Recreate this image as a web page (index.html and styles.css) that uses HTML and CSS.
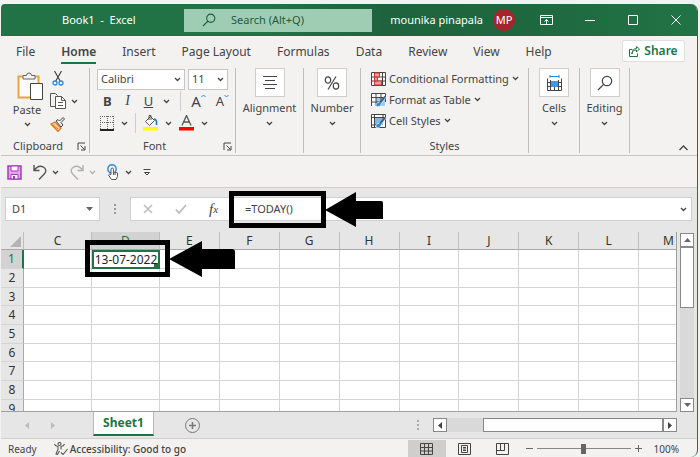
FILE: index.html
```
<!DOCTYPE html>
<html lang="en">
<head>
    <meta charset="UTF-8">
    <meta name="viewport" content="width=device-width, initial-scale=1">
    <title>Book1 - Excel</title>
    <link rel="stylesheet" href="styles.css">
</head>
<body>
    <svg class="defs" width="0" height="0" aria-hidden="true">
        <symbol id="chev" viewBox="0 0 7 5"><path d="M1 1l2.500 2.500L6 1" fill="none" stroke="currentColor" stroke-width="1.300"/></symbol>
        <symbol id="launch" viewBox="0 0 9 9"><path d="M1 8V1h7M3.500 3.500L7.500 7.500M8 4v4H4" fill="none" stroke="currentColor"/></symbol>
        <symbol id="glass" viewBox="0 0 16 16"><circle cx="10" cy="6" r="4.700" fill="none" stroke="currentColor" stroke-width="1.200"/><path d="M6.600 9.400L1 15" stroke="currentColor" stroke-width="1.300"/></symbol>
    </svg>
    <div class="window">
        <header class="titlebar">
            <h1 class="doc-title">Book1&nbsp; -&nbsp; Excel</h1>
            <label class="search">
                <svg width="14" height="14"><use href="#glass"/></svg>
                <input type="text" placeholder="Search (Alt+Q)" aria-label="Search">
            </label>
            <div class="account">
                <span>mounika pinapala</span>
                <span class="avatar">MP</span>
            </div>
            <div class="window-buttons">
                <button type="button" aria-label="Ribbon display options"><svg width="13" height="10" fill="none" stroke="currentColor"><path d="M.5.5h12v9H.5zM.5 2.500h12M6.500 9V4.500M4.500 6.500l2-2 2 2"/></svg></button>
                <button type="button" aria-label="Minimize"><svg width="10" height="10" stroke="currentColor"><path d="M0 5.500h10"/></svg></button>
                <button type="button" aria-label="Maximize"><svg width="10" height="10" fill="none" stroke="currentColor"><path d="M.5.5h9v9h-9z"/></svg></button>
                <button type="button" aria-label="Close"><svg width="10" height="10" stroke="currentColor"><path d="M.5.5l9 9M9.500.5l-9 9"/></svg></button>
            </div>
        </header>

        <nav class="tabs">
            <a href="#file">File</a>
            <a href="#home" class="active">Home</a>
            <a href="#insert">Insert</a>
            <a href="#layout">Page Layout</a>
            <a href="#formulas">Formulas</a>
            <a href="#data">Data</a>
            <a href="#review">Review</a>
            <a href="#view">View</a>
            <a href="#help">Help</a>
            <button type="button" class="share">
                <svg width="11" height="11" fill="none" stroke="currentColor"><path d="M3.500 3.500h-3v7h8v-3M3 8c0-3 2-4 4.500-4V6l3-3-3-2.500V2.500C4.500 2.500 3 5 3 8z"/></svg>
                Share
            </button>
        </nav>

        <section class="ribbon">
            <div class="group clipboard">
                <div class="group-body">
                    <button type="button" class="paste">
                        <svg width="26" height="28" fill="none">
                            <path d="M1.500 4.500h20v21h-20z" fill="#fafafa" stroke="#e8a33d" stroke-width="2"/>
                            <path d="M6 7V3.500h3.500a2.500 2.500 0 0 1 5 0H18V7z" fill="#f3f3f3" stroke="#666"/>
                            <path d="M13.500 11.500h12v16h-12z" fill="#fff" stroke="#444"/>
                        </svg>
                        Paste
                        <svg class="chev"><use href="#chev"/></svg>
                    </button>
                    <div class="clip-tools">
                        <button type="button" aria-label="Cut"><svg width="12" height="15" fill="none"><path d="M2.500 0L8.500 10.500M9.500 0L3.500 10.500" stroke="#444" stroke-width="1.200"/><circle cx="3" cy="12" r="2" stroke="#2b88d8" stroke-width="1.300"/><circle cx="9" cy="12" r="2" stroke="#2b88d8" stroke-width="1.300"/></svg></button>
                        <button type="button" aria-label="Copy"><svg width="16" height="16" fill="none" stroke="#555"><path d="M5.500 13.500h-5V.5h5l2 2"/><path d="M5.500 3.500h6l4 4v8h-10z" fill="#fff"/><path d="M11.500 3.500v4h4M8 9.500h5M8 12.500h5"/></svg><svg class="chev"><use href="#chev"/></svg></button>
                        <button type="button" aria-label="Format Painter"><svg width="16" height="15" fill="none"><path d="M1 7l4-2 6 6-3 3.500z" fill="#f8c99a" stroke="#e07b20" stroke-width="1.300"/><path d="M3 8l5 4" stroke="#e07b20"/><path d="M6 4l5 6 2-2-2-2.500 3.500-3.500-1.500-1.500L9.500 4 8 2.500z" fill="#eee" stroke="#444"/></svg></button>
                    </div>
                </div>
                <div class="group-name">Clipboard <button type="button" aria-label="Clipboard settings"><svg width="9" height="9"><use href="#launch"/></svg></button></div>
            </div>

            <div class="group font">
                <div class="font-row">
                    <div class="select font-name"><select aria-label="Font"><option>Calibri</option></select><svg class="chev"><use href="#chev"/></svg></div>
                    <div class="select font-size"><select aria-label="Font size"><option>11</option></select><svg class="chev"><use href="#chev"/></svg></div>
                </div>
                <div class="font-row styles-row">
                    <button type="button" class="bold">B</button>
                    <button type="button" class="italic">I</button>
                    <button type="button" class="underline">U</button>
                    <button type="button" aria-label="Underline options"><svg class="chev"><use href="#chev"/></svg></button>
                    <span class="rule"></span>
                    <button type="button" class="grow" aria-label="Increase font size">A<svg width="5" height="4" fill="none" stroke="#2b88d8"><path d="M.5 3l2-2 2 2"/></svg></button>
                    <button type="button" class="shrink" aria-label="Decrease font size">A<svg width="5" height="4" fill="none" stroke="#2b88d8"><path d="M.5 1l2 2 2-2"/></svg></button>
                </div>
                <div class="font-row colors-row">
                    <button type="button" aria-label="Borders"><svg width="14" height="15" fill="none" stroke="#666"><path d="M.5 0v13M13.500 0v13M7.500 0v13M0 .5h14M0 6.500h14" stroke-dasharray="1 1"/><path d="M0 14h14" stroke="#222" stroke-width="2"/></svg><svg class="chev"><use href="#chev"/></svg></button>
                    <span class="rule"></span>
                    <button type="button" aria-label="Fill color"><svg width="15" height="16" fill="none"><path d="M2.500 6.500l5-5 4 4-5 5z" fill="#fff" stroke="#555"/><path d="M6 5V.5h2V5" stroke="#555"/><path d="M11 4c2 0 3 2 2.500 6" stroke="#2271b8" stroke-width="1.600"/><path d="M0 12h15v3.500H0z" fill="#ff0"/></svg><svg class="chev"><use href="#chev"/></svg></button>
                    <button type="button" aria-label="Font color"><svg width="15" height="16" fill="none"><path d="M3 10.500L7.500.5 12 10.500M4.500 7h6" stroke="#555" stroke-width="1.300"/><path d="M0 12h15v3.500H0z" fill="red"/></svg><svg class="chev"><use href="#chev"/></svg></button>
                </div>
                <div class="group-name">Font <button type="button" aria-label="Font settings"><svg width="9" height="9"><use href="#launch"/></svg></button></div>
            </div>

            <div class="group alignment">
                <button type="button" class="big">
                    <span class="tile"><svg width="14" height="14" stroke="#444"><path d="M0 .5h14M2 4.500h10M0 8.500h14M2 12.500h10"/></svg></span>
                    Alignment
                    <svg class="chev"><use href="#chev"/></svg>
                </button>
            </div>
            <div class="group number">
                <button type="button" class="big">
                    <span class="tile"><svg width="16" height="14" fill="none" stroke="#444" stroke-width="1.200"><ellipse cx="4" cy="4" rx="2.700" ry="3.200"/><ellipse cx="12" cy="10" rx="2.700" ry="3.200"/><path d="M12 .5L4 13.500"/></svg></span>
                    Number
                    <svg class="chev"><use href="#chev"/></svg>
                </button>
            </div>
            <div class="group cell-styles">
                <button type="button" class="line-button">
                    <svg width="15" height="14" fill="none"><path d="M.5.5h14v13H.5z" fill="#fff"/><path d="M.5.5h14v13H.5zM.5 5h14M.5 9h14M11.500.5v13" stroke="#444"/><path d="M3.500 1h5v4h-5zM3.500 5h3v4h-3zM3.500 9h7v4h-7z" fill="#f79a9a" stroke="#d13438"/></svg>
                    Conditional Formatting <svg class="chev"><use href="#chev"/></svg>
                </button>
                <button type="button" class="line-button">
                    <svg width="15" height="14" fill="none"><path d="M.5.5h14v13H.5z" fill="#fff"/><path d="M5 5h9v8H5z" fill="#9ccaf0"/><path d="M.5 13V.5h14V9M.5 4.500h14M.5 9h8M5 .5V13M10 .5V7" stroke="#444"/><path d="M5 13.500c0-3 1-4 3-4l5.500-6 1.500 1-5 6.500c0 2-2 3-5 2.500z" fill="#2b88d8" stroke="#fff" stroke-width=".6"/><path d="M9 9l5-5.500" stroke="#555" stroke-width="1.500"/></svg>
                    Format as Table <svg class="chev"><use href="#chev"/></svg>
                </button>
                <button type="button" class="line-button">
                    <svg width="15" height="14" fill="none"><path d="M.5.5h14v13H.5z" fill="#fff"/><path d="M3 4h9v7H3z" fill="#7dbbee"/><path d="M.5.5h14v13H.5zM.5 3.500h14M.5 11h7M3.500.5v13M12 .5V5" stroke="#444"/><path d="M5 13.500c0-3 1-4 3-4l5.500-6 1.500 1-5 6.500c0 2-2 3-5 2.500z" fill="#2b88d8" stroke="#fff" stroke-width=".6"/><path d="M9 9l5-5.500" stroke="#555" stroke-width="1.500"/></svg>
                    Cell Styles <svg class="chev"><use href="#chev"/></svg>
                </button>
                <div class="group-name">Styles</div>
            </div>
            <div class="group cells">
                <button type="button" class="big">
                    <span class="tile"><svg width="15" height="16" fill="none"><path d="M.5 4.500h14v11H.5z" fill="#fff"/><path d="M.5 3.500v12h14v-12M.5 7.500h14M.5 11.500h14M3.500 5v10.500M11.500 5v10.500M7.500 12v3" stroke="#444"/><path d="M4 6h7v6H4z" fill="#3b9be8"/><path d="M3 1.500h9M3 0v3M12 0v3" stroke="#2b88d8"/></svg></span>
                    Cells
                    <svg class="chev"><use href="#chev"/></svg>
                </button>
            </div>
            <div class="group editing">
                <button type="button" class="big">
                    <span class="tile"><svg width="16" height="16"><use href="#glass"/></svg></span>
                    Editing
                    <svg class="chev"><use href="#chev"/></svg>
                </button>
            </div>
            <button type="button" class="collapse" aria-label="Collapse ribbon"><svg width="9" height="6" fill="none" stroke="currentColor" stroke-width="1.300"><path d="M.5 5l4-4 4 4"/></svg></button>
        </section>

        <div class="quick">
            <button type="button" aria-label="Save"><svg width="15" height="15" fill="none"><path d="M1 1h13v13H1z" fill="#e3a6ea" stroke="#a33bb5" stroke-width="1.500"/><path d="M4 1h7v5H4z" fill="#fff" stroke="#a33bb5"/><path d="M4 9.500h7V14H4z" fill="#fff" stroke="#a33bb5"/><path d="M6 11h2v3H6z" fill="#a33bb5"/></svg></button>
            <button type="button" aria-label="Undo"><svg width="14" height="15" fill="none" stroke="#555" stroke-width="1.400"><path d="M1 0v5.500h5.500M1 5.500C3.500 2 7 .5 10 1.800s3.700 4.700 1.500 7L6 14.500"/></svg><svg class="chev"><use href="#chev"/></svg></button>
            <button type="button" class="off" aria-label="Redo"><svg width="14" height="15" fill="none" stroke="currentColor" stroke-width="1.400"><path d="M13 0v5.500H7.500M13 5.500C10.500 2 7 .5 4 1.800S.3 6.500 2.500 8.800L8 14.500"/></svg><svg class="chev"><use href="#chev"/></svg></button>
            <button type="button" class="touch" aria-label="Touch mode"><svg width="13" height="16" fill="none"><circle cx="5" cy="5" r="4.200" stroke="#2b88d8" stroke-width="1.400"/><path d="M4 10.500V5.200a1.200 1.200 0 0 1 2.400 0V8l4.100 1v3.500l-1.500 3H4.500L1.500 11l1-.8z" fill="#fff" stroke="#555"/><path d="M8 9v2M6.400 8v3" stroke="#555"/></svg><svg class="chev"><use href="#chev"/></svg></button>
            <button type="button" aria-label="Customize Quick Access Toolbar"><svg width="8" height="7" fill="none" stroke="#444"><path d="M.5.5h7M1.500 3.500L4 6l2.500-2.500z"/></svg></button>
        </div>

        <div class="formula-bar">
            <div class="name-box">
                <input type="text" value="D1" aria-label="Name Box">
                <svg width="7" height="4" fill="#666"><path d="M0 0h7L3.500 4z"/></svg>
            </div>
            <svg class="dots" width="2" height="10" fill="#999"><path d="M0 0h2v2H0zM0 4h2v2H0zM0 8h2v2H0z"/></svg>
            <div class="formula">
                <button type="button" aria-label="Cancel"><svg width="10" height="10" stroke="#bbb" stroke-width="1.500"><path d="M1 1l8 8M9 1L1 9"/></svg></button>
                <button type="button" aria-label="Enter"><svg width="12" height="10" fill="none" stroke="#bbb" stroke-width="1.800"><path d="M1 5.500L4 9l7-8"/></svg></button>
                <button type="button" class="fx" aria-label="Insert function">f<sub>x</sub></button>
                <input type="text" value="=TODAY()" aria-label="Formula">
                <svg class="chev"><use href="#chev"/></svg>
                <div class="callout callout-formula">
                    <span class="callout-box"></span>
                    <svg width="58" height="36"><path d="M0 18L31 0v9h25q2 0 2 2v16H31v8z"/></svg>
                </div>
            </div>
        </div>

        <main class="sheet">
            <div class="grid">
                <table>
                    <colgroup><col class="col-head"><col class="col-wide"><col class="col-wide"><col span="9"></colgroup>
                    <thead>
                        <tr><th class="corner"><svg width="11" height="11" fill="#b4b4b4"><path d="M11 0v11H0z"/></svg></th><th>C</th><th class="selected">D</th><th>E</th><th>F</th><th>G</th><th>H</th><th>I</th><th>J</th><th>K</th><th>L</th><th>M</th></tr>
                    </thead>
                    <tbody>
                        <tr><th class="selected">1</th><td></td><td class="active-cell">13-07-2022</td><td></td><td></td><td></td><td></td><td></td><td></td><td></td><td></td><td></td></tr>
                        <tr><th>2</th><td></td><td></td><td></td><td></td><td></td><td></td><td></td><td></td><td></td><td></td><td></td></tr>
                        <tr><th>3</th><td></td><td></td><td></td><td></td><td></td><td></td><td></td><td></td><td></td><td></td><td></td></tr>
                        <tr><th>4</th><td></td><td></td><td></td><td></td><td></td><td></td><td></td><td></td><td></td><td></td><td></td></tr>
                        <tr><th>5</th><td></td><td></td><td></td><td></td><td></td><td></td><td></td><td></td><td></td><td></td><td></td></tr>
                        <tr><th>6</th><td></td><td></td><td></td><td></td><td></td><td></td><td></td><td></td><td></td><td></td><td></td></tr>
                        <tr><th>7</th><td></td><td></td><td></td><td></td><td></td><td></td><td></td><td></td><td></td><td></td><td></td></tr>
                        <tr><th>8</th><td></td><td></td><td></td><td></td><td></td><td></td><td></td><td></td><td></td><td></td><td></td></tr>
                        <tr><th>9</th><td></td><td></td><td></td><td></td><td></td><td></td><td></td><td></td><td></td><td></td><td></td></tr>
                    </tbody>
                </table>
                <div class="callout callout-cell">
                    <span class="callout-box"></span>
                    <svg width="66" height="36"><path d="M0 18L33 0v8h30q3 0 3 3v17H33v8z"/></svg>
                </div>
            </div>
            <div class="vscroll">
                <button type="button" aria-label="Scroll up"><svg width="7" height="4" fill="#666"><path d="M0 4h7L3.500 0z"/></svg></button>
                <div class="thumb"></div>
                <div class="track"></div>
                <button type="button" aria-label="Scroll down"><svg width="7" height="4" fill="#666"><path d="M0 0h7L3.500 4z"/></svg></button>
            </div>
        </main>

        <div class="sheet-bar">
            <div class="sheet-nav">
                <button type="button" aria-label="Previous sheet"><svg width="4" height="7" fill="#bbb"><path d="M4 0v7L0 3.500z"/></svg></button>
                <button type="button" aria-label="Next sheet"><svg width="4" height="7" fill="#bbb"><path d="M0 0v7l4-3.500z"/></svg></button>
            </div>
            <button type="button" class="sheet-tab">Sheet1</button>
            <button type="button" class="add" aria-label="New sheet"><svg width="15" height="15" fill="none" stroke="#777"><circle cx="7.500" cy="7.500" r="7"/><path d="M4 7.500h7M7.500 4v7" stroke-width="1.600"/></svg></button>
            <svg class="dots" width="2" height="10" fill="#aaa"><path d="M0 0h2v2H0zM0 4h2v2H0zM0 8h2v2H0z"/></svg>
            <div class="hscroll">
                <button type="button" aria-label="Scroll left"><svg width="4" height="7" fill="#444"><path d="M4 0v7L0 3.500z"/></svg></button>
                <div class="track"></div>
                <div class="thumb"></div>
                <button type="button" aria-label="Scroll right"><svg width="4" height="7" fill="#444"><path d="M0 0v7l4-3.500z"/></svg></button>
            </div>
        </div>

        <footer class="status">
            <span class="ready">Ready</span>
            <svg width="14" height="13" fill="none" stroke="#555" stroke-width="1.100"><circle cx="5.500" cy="2" r="1.500"/><path d="M.5 2l1 1.500L4 4.500v3L2 12l1.500.5 2-3.500M10.500 2l-1 1.500L7 4.500v3M7 10.500L9 12.500 13.500 7"/></svg>
            <span class="access">Accessibility: Good to go</span>
            <button type="button" class="view on" aria-label="Normal view"><svg width="13" height="12" fill="none" stroke="#444"><path d="M.5.5h12v11H.5zM.5 4.500h12M.5 8h12M4.500.5v11M8.500.5v11"/></svg></button>
            <button type="button" class="view" aria-label="Page layout view"><svg width="13" height="12" fill="none" stroke="#444"><path d="M.5.5h12v11H.5zM3.500 2.500h6v7h-6zM5 4.500h3M5 6h3M5 7.500h3"/></svg></button>
            <button type="button" class="view" aria-label="Page break view"><svg width="13" height="12" fill="none" stroke="#444"><path d="M.5.5h12v11H.5zM.5 7.500h8v-7M4.500.5v7"/></svg></button>
            <button type="button" class="zoom-step" aria-label="Zoom out"><svg width="7" height="7" stroke="#666"><path d="M0 3.500h7"/></svg></button>
            <input type="range" min="0" max="100" value="50" aria-label="Zoom">
            <button type="button" class="zoom-step" aria-label="Zoom in"><svg width="7" height="7" stroke="#666"><path d="M0 3.500h7M3.500 0v7"/></svg></button>
            <span class="percent">100%</span>
        </footer>
    </div>
</body>
</html>
```
FILE: styles.css
```
* {
    box-sizing: border-box;
}
body {
    margin: 0;
    padding: 4px 2px 0 1px;
    min-height: 100vh;
    display: flex;
    background: #f1f3f2;
    color: #444;
    font-family: "Noto Sans", "Open Sans", sans-serif;
    font-size: 11px;
    line-height: 14px;
}
button, input, select {
    font: inherit;
    color: inherit;
    border: none;
    background: none;
    padding: 0;
    margin: 0;
    outline: none;
}
button {
    display: flex;
    align-items: center;
    justify-content: center;
}
svg {
    flex: none;
    display: block;
}
.defs {
    position: absolute;
}
.chev {
    width: 7px;
    height: 5px;
}
.window {
    flex: 1;
    min-width: 0;
    display: flex;
    flex-direction: column;
    background: #f3f2f1;
    border-right: 1px solid #217346;
    border-radius: 4px 7px 7px 4px;
    overflow: hidden;
}

/* title bar */
.titlebar {
    display: flex;
    align-items: center;
    height: 32px;
    background: linear-gradient(90deg, #217346 38%, #1e633d 55%, #1f683f 75%, #217346);
    color: #fff;
}
.doc-title {
    width: 183px;
    padding-left: 61px;
    margin: 0;
    font-size: 11px;
    font-weight: 400;
    white-space: nowrap;
}
.search {
    display: flex;
    align-items: center;
    gap: 15px;
    width: 188px;
    height: 23px;
    padding-left: 18px;
    background: #9fcdb3;
    color: #1e5c3a;
}
.search input {
    flex: 1;
    min-width: 0;
}
.search input::placeholder {
    color: #1e5c3a;
    opacity: 1;
}
.account {
    display: flex;
    align-items: center;
    gap: 10px;
    margin-left: auto;
}
.avatar {
    width: 22px;
    height: 22px;
    border-radius: 50%;
    background: #a4262c;
    line-height: 22px;
    text-align: center;
}
.window-buttons {
    display: flex;
    margin-left: 10px;
}
.window-buttons button {
    width: 43px;
    height: 32px;
}

/* ribbon tabs */
.tabs {
    display: flex;
    align-items: center;
    gap: 26px;
    height: 28px;
    padding: 2px 12px 0 15px;
    font-size: 12px;
}
.tabs a {
    padding: 6px 0 3px;
    border-bottom: 2px solid transparent;
    color: #444;
    text-decoration: none;
    white-space: nowrap;
}
.tabs a.active {
    border-color: #217346;
    font-weight: 600;
}
.share {
    gap: 4px;
    width: 63px;
    height: 22px;
    margin-left: auto;
    background: #fff;
    border: 1px solid #e1dfdd;
    border-radius: 2px;
    color: #217346;
    font-weight: 600;
}

/* ribbon */
.ribbon {
    display: flex;
    height: 92px;
    padding: 4px 0 2px;
    border-bottom: 1px solid #c8c6c4;
}
.group {
    display: flex;
    flex-direction: column;
    border-right: 1px solid #c0bebc;
}
.group-name {
    display: flex;
    align-items: center;
    justify-content: center;
    margin-top: auto;
    font-size: 11px;
}
.clipboard {
    width: 89px;
}
.clipboard .group-name, .font .group-name {
    padding-right: 3px;
}
.clipboard .group-name {
    justify-content: space-between;
    padding-left: 12px;
}
.group-body {
    display: flex;
    padding: 2px 0 0 11px;
}
.paste {
    flex-direction: column;
    justify-content: flex-start;
    width: 30px;
    padding-top: 2px;
}
.paste .chev {
    margin-top: 5px;
}
.paste svg:first-child {
    margin: 0 0 3px 6px;
}
.clip-tools {
    display: flex;
    flex-direction: column;
    gap: 7px;
    padding-left: 8px;
}
.clip-tools button {
    gap: 5px;
    justify-content: flex-start;
    height: 16px;
}
.clip-tools button:first-child {
    padding-left: 2px;
}
.font {
    width: 146px;
    padding-left: 7px;
}
.font .group-name {
    width: 100%;
    padding-left: 46px;
    justify-content: space-between;
}
.font-row {
    display: flex;
    align-items: center;
    height: 22px;
    gap: 3px;
}
.select {
    display: flex;
    align-items: center;
    height: 21px;
    padding: 0 3px;
    background: #fff;
    border: 1px solid #c8c6c4;
}
.select select {
    flex: 1;
    min-width: 0;
    appearance: none;
}
.font-name {
    width: 88px;
}
.font-size {
    width: 40px;
}
.rule {
    width: 1px;
    height: 20px;
    background: #d0cecc;
}
.styles-row {
    gap: 10px;
    padding: 0 0 0 6px;
    font-size: 13px;
}
.bold {
    font-weight: 700;
}
.italic {
    width: 12px;
    font-family: "Liberation Serif", serif;
    font-style: italic;
    font-size: 14px;
}
.underline {
    text-decoration: underline;
}
.grow, .shrink {
    align-items: flex-start;
}
.grow {
    font-size: 15px;
}
.colors-row {
    gap: 7px;
    padding-left: 3px;
}
.colors-row button {
    gap: 7px;
}
.alignment {
    width: 68px;
}
.number {
    width: 57px;
}
.cells {
    width: 51px;
}
.editing {
    width: 50px;
}
.big {
    flex-direction: column;
    width: 100%;
}
.tile {
    display: flex;
    align-items: center;
    justify-content: center;
    width: 30px;
    height: 29px;
    margin-bottom: 4px;
    background: #fff;
    border: 1px solid #d0cecc;
}
.big .chev {
    margin-top: 6px;
}
.cell-styles {
    width: 168px;
    padding-left: 10px;
}
.line-button {
    justify-content: flex-start;
    gap: 3px;
    height: 21px;
    white-space: nowrap;
}
.cell-styles .group-name {
    padding-right: 10px;
}
.collapse {
    align-self: flex-end;
    margin: 0 9px 2px auto;
}

/* quick access toolbar */
.quick {
    display: flex;
    align-items: center;
    gap: 11px;
    height: 32px;
    padding: 1px 0 0 6px;
    border-bottom: 1px solid #d0cecc;
}
.quick button {
    gap: 5px;
}
.quick .off {
    color: #b0b0b0;
}

/* formula bar */
.formula-bar {
    display: flex;
    align-items: center;
    gap: 14px;
    height: 44px;
    padding: 0 5px 2px 4px;
    background: #e6e6e6;
}
.name-box {
    display: flex;
    align-items: center;
    width: 95px;
    height: 24px;
    padding: 0 6px;
    background: #fff;
    border: 1px solid #d0d0d0;
}
.name-box input {
    flex: 1;
    min-width: 0;
}
.formula {
    position: relative;
    display: flex;
    align-items: center;
    flex: 1;
    height: 24px;
    padding: 0 4px 0 0;
    background: #fff;
    border: 1px solid #d0d0d0;
}
.formula button {
    width: 33px;
}
.formula input {
    flex: 1;
    min-width: 0;
    padding-left: 15px;
}
.formula .fx {
    font-family: "Liberation Serif", serif;
    font-style: italic;
    font-size: 15px;
}
.fx sub {
    font-size: 11px;
}

/* black markers pointing at the formula and its result */
.callout {
    position: absolute;
    display: flex;
    align-items: center;
}
.callout svg {
    margin-left: -1px;
}
.callout-box {
    height: 37px;
    border: 5px solid #000;
}
.callout-formula {
    left: 98px;
    top: -7px;
}
.callout-formula .callout-box {
    width: 97px;
}
.callout-cell {
    left: 84px;
    top: 8px;
}
.callout-cell .callout-box {
    width: 85px;
}

/* sheet */
.sheet {
    display: flex;
    flex: 1;
    background: #e6e6e6;
}
.grid {
    position: relative;
    flex: 1;
    height: 180px;
    overflow: hidden;
    border-right: 1px solid #a0a0a0;
    border-bottom: 1px solid #a0a0a0;
}
table {
    width: 698px;
    table-layout: fixed;
    border-collapse: separate;
    border-spacing: 0;
    font-size: 12px;
    line-height: 16px;
}
.col-head {
    width: 23px;
}
.col-wide {
    width: 68px;
}
th, td {
    padding: 0;
    border-right: 1px solid #d4d4d4;
    border-bottom: 1px solid #d4d4d4;
    text-align: center;
    font-weight: 400;
}
th {
    background: #e6e6e6;
    color: #333;
}
td {
    background: #fff;
    color: #222;
}
thead tr {
    height: 18px;
}
tbody tr {
    height: 19px;
}
tbody tr:nth-child(3n) {
    height: 18px;
}
thead th {
    border-right-color: #bdbdbd;
    border-bottom-color: #a8a8a8;
}
tbody th {
    border-right-color: #a8a8a8;
}
.corner svg {
    margin: 2px 2px 0 auto;
}
.selected {
    background: #d2d2d2;
    color: #217346;
}
tbody .selected {
    border-right: 2px solid #217346;
}
.active-cell {
    border: 2px solid #217346;
    line-height: 14px;
    white-space: nowrap;
    background: linear-gradient(#217346, #217346) right bottom / 4px 4px no-repeat #fff;
}

/* scroll bars */
.vscroll {
    display: flex;
    flex-direction: column;
    width: 20px;
    padding: 1px 3px 0;
}
.vscroll button, .hscroll button {
    flex: none;
    width: 14px;
    height: 14px;
    background: #fff;
    border: 1px solid #888;
}
.thumb {
    background: #fff;
    border: 1px solid #888;
}
.track {
    flex: 1;
    background: #d9d9d9;
}
.vscroll .thumb {
    height: 61px;
}
.sheet-bar {
    display: flex;
    align-items: center;
    height: 27px;
    padding-right: 20px;
    background: #e6e6e6;
    border-bottom: 1px solid #d0d0d0;
}
.sheet-nav {
    display: flex;
    gap: 22px;
    width: 92px;
    padding-left: 24px;
}
.sheet-tab {
    align-self: flex-start;
    width: 61px;
    height: 24px;
    background: #fff;
    border: 1px solid #b8b8b8;
    border-top: none;
    border-bottom: 2px solid #217346;
    color: #217346;
    font-size: 12px;
    font-weight: 700;
}
.add {
    margin-left: 31px;
}
.sheet-bar .dots {
    margin-left: auto;
}
.hscroll {
    display: flex;
    width: 244px;
    margin-left: 14px;
}
.hscroll .thumb {
    width: 180px;
}

/* status bar */
.status {
    display: flex;
    align-items: center;
    height: 18px;
    padding: 1px 18px 0 7px;
    font-size: 10px;
    white-space: nowrap;
}
.ready {
    margin-right: 17px;
}
.access {
    margin-left: 2px;
    margin-right: auto;
    font-weight: 500;
}
.view {
    width: 38px;
    height: 18px;
}
.view.on {
    background: #d0cecc;
}
.zoom-step {
    margin-left: 4px;
}
.status input {
    width: 94px;
    height: 12px;
    margin: 0 0 0 4px;
    appearance: none;
    background: linear-gradient(#888, #888) center / 100% 1px no-repeat;
}
.status input::-webkit-slider-thumb {
    appearance: none;
    width: 5px;
    height: 10px;
    background: #666;
}
.percent {
    margin-left: 12px;
}
```
